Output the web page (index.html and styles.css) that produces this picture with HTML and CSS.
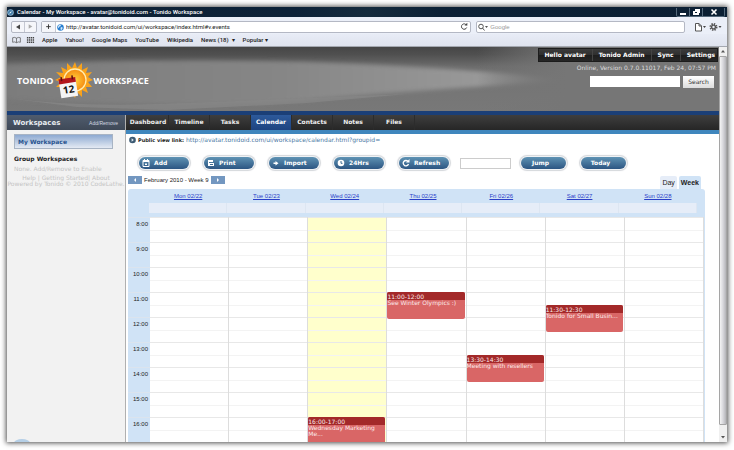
FILE: index.html
```
<!DOCTYPE html>
<html lang="en">
<head>
    <meta charset="UTF-8">
    <meta name="viewport" content="width=device-width, initial-scale=1.0">
    <title>Calendar - My Workspace - avatar@tonidoid.com - Tonido Workspace</title>
    <link rel="stylesheet" href="styles.css">
</head>
<body>
<div class="window">
    <div class="titlebar">
        <svg class="globe" viewBox="0 0 16 16"><circle cx="8" cy="8" r="7.5" fill="#8fb4cf"/><circle cx="8" cy="8" r="5.5" fill="#3f7ba8"/><path d="M11 5L9 9l-4 2 2-4z" fill="#e8f2f8"/></svg>
        <span class="title">Calendar - My Workspace - avatar@tonidoid.com - Tonido Workspace</span>
        <div class="window-buttons">
            <button type="button" aria-label="Minimize"><svg viewBox="0 0 12 8"><path d="M3 5h6v2H3z" fill="#fff"/></svg></button>
            <button type="button" aria-label="Restore"><svg viewBox="0 0 12 8"><path d="M5 1h5v4H9v2H3V3h2z" fill="#fff"/><path d="M5 4h2v1H5z" fill="#0c2034"/></svg></button>
            <button type="button" class="close" aria-label="Close"><svg viewBox="0 0 12 8"><path d="M3.5 1.5l5 5M8.500 1.500l-5 5" stroke="#fff" stroke-width="1.600"/></svg></button>
        </div>
    </div>

    <div class="toolbar">
        <div class="history">
            <button type="button" aria-label="Back"><svg viewBox="0 0 12 10"><path d="M8 2.500v5L4 5z" fill="#444"/></svg></button>
            <button type="button" aria-label="Forward"><svg viewBox="0 0 12 10"><path d="M4 2.500v5L8 5z" fill="#aaa"/></svg></button>
        </div>
        <div class="address">
            <button type="button" aria-label="Add bookmark"><svg viewBox="0 0 14 10"><path d="M7 2.500v5M4.500 5h5" stroke="#333" stroke-width="1"/></svg></button>
            <svg class="globe" viewBox="0 0 16 16"><circle cx="8" cy="8" r="7.500" fill="#2a7fd0"/><path d="M3 4q3-3 6-2l-1 3-3 1-1 3-2-1zM9 7l4 1-1 4-3 2-1-4z" fill="#d5eafa"/></svg>
            <input type="text" aria-label="Address" value="http://avatar.tonidoid.com/ui/workspace/index.html#v.events">
            <button type="button" class="reload" aria-label="Reload"><svg viewBox="0 0 12 10"><path d="M8.500 3.200A2.700 2.700 0 1 0 8.700 5.500" fill="none" stroke="#444" stroke-width="1"/><path d="M6.500 3.500h2.800V.8z" fill="#444"/></svg></button>
        </div>
        <div class="websearch">
            <svg viewBox="0 0 12 10"><circle cx="4" cy="4.500" r="2.300" fill="none" stroke="#555"/><path d="M5.500 6L7.500 8.500" stroke="#555"/><path d="M8 4h3L9.500 6z" fill="#555"/></svg>
            <input type="search" aria-label="Google search" placeholder="Google">
        </div>
        <button type="button" class="tool" aria-label="Page menu"><svg viewBox="0 0 13 10"><path d="M1.500 1.500h3.500l2.500 2.500v5h-6zM5 1.500V4h2.500" fill="#fff" stroke="#555"/><path d="M9 4h3l-1.500 2z" fill="#444"/></svg></button>
        <button type="button" class="tool" aria-label="Settings menu"><svg viewBox="0 0 13 10"><circle cx="4.500" cy="5" r="3" fill="none" stroke="#555" stroke-width="2" stroke-dasharray="1.300 1.056"/><circle cx="4.500" cy="5" r="1.900" fill="none" stroke="#555" stroke-width="1.400"/><path d="M9.500 4h3L11 6z" fill="#444"/></svg></button>
    </div>

    <div class="bookmarks">
        <svg viewBox="0 0 10 8"><path d="M5 2Q3 .5.700 1.500v5Q3 5.500 5 7q2-1.500 4.300-.5v-5Q7 .5 5 2zv5" fill="none" stroke="#555" stroke-width=".8"/></svg>
        <svg viewBox="0 0 10 8"><path d="M1 1.500h8M1 4h8M1 6.500h8" stroke="#444" stroke-width="1.500" stroke-dasharray="1.500 .66"/></svg>
        <a href="#">Apple</a>
        <a href="#">Yahoo!</a>
        <a href="#">Google Maps</a>
        <a href="#">YouTube</a>
        <a href="#">Wikipedia</a>
        <a href="#">News (18) &nbsp;▾</a>
        <a href="#">Popular ▾</a>
    </div>

    <div class="viewport">
        <div class="page">
            <header class="header">
                <svg class="swoosh" viewBox="0 0 712 64" preserveAspectRatio="none">
                    <defs>
                        <linearGradient id="base" x1="0" y1="0" x2="0" y2="1">
                            <stop offset="0" stop-color="#464646"/>
                            <stop offset=".12" stop-color="#505050"/>
                            <stop offset=".3" stop-color="#6b6b6b"/>
                            <stop offset=".5" stop-color="#747474"/>
                            <stop offset="1" stop-color="#787878"/>
                        </linearGradient>
                        <linearGradient id="beam" x1="0" y1="0" x2="1" y2="0">
                            <stop offset="0" stop-color="#7c7c7c"/>
                            <stop offset=".5" stop-color="#868686"/>
                            <stop offset=".85" stop-color="#989898"/>
                            <stop offset="1" stop-color="#767676"/>
                        </linearGradient>
                        <linearGradient id="flat" x1="0" y1="0" x2="1" y2="0">
                            <stop offset="0" stop-color="#767676" stop-opacity="0"/>
                            <stop offset="1" stop-color="#767676"/>
                        </linearGradient>
                        <filter id="soft"><feGaussianBlur stdDeviation="2"/></filter>
                    </defs>
                    <rect width="712" height="64" fill="url(#base)"/>
                    <path d="M-8 18Q200 10 350 17T556 34Q400 44 300 53T-8 52z" fill="url(#beam)" filter="url(#soft)"/>
                    <path d="M0 51Q70 60 150 57T400 47L300 56 160 63 70 60z" fill="#888" opacity=".7"/>
                    <rect x="470" width="90" height="64" fill="url(#flat)"/>
                    <rect x="559" width="153" height="64" fill="#767676"/>
                </svg>
                <div class="logo">
                    <span>TONIDO</span>
                    <svg viewBox="0 0 38 38">
                        <defs><radialGradient id="sun"><stop offset="0" stop-color="#ffd23c"/><stop offset="1" stop-color="#f58a12"/></radialGradient></defs>
                        <path d="M20 0l2 6 5-5 0 7 6-3-2 6 6-1-4 5 5 3-5 2 4 5-6 0 2 6-6-3 0 7-5-5-2 6-3-6-5 5 0-7-6 3 2-6-7 0 5-5-6-2 6-3-5-5 7 1-2-6 6 3 0-7 5 5z" fill="#f9a21b"/>
                        <circle cx="20" cy="18" r="11" fill="url(#sun)" stroke="#ffedb0" stroke-width="1.300"/>
                        <g transform="rotate(-9 14 27)">
                            <path d="M5 17h17v18H5z" fill="#f4f4f4"/>
                            <path d="M5 16h17v5H5z" fill="#b3161b"/>
                            <path d="M8 14v4M19 14v4" stroke="#5b0d10" stroke-width="1.500"/>
                            <text x="13.500" y="31" class="logo-day">12</text>
                        </g>
                    </svg>
                    <span>WORKSPACE</span>
                </div>
                <div class="account">
                    <nav class="account-links">
                        <a href="#">Hello avatar</a>
                        <a href="#">Tonido Admin</a>
                        <a href="#">Sync</a>
                        <a href="#">Settings</a>
                    </nav>
                    <div class="status">Online, Version 0.7.0.11017, Feb 24, 07:57 PM</div>
                    <form class="site-search">
                        <input type="text" aria-label="Search workspace">
                        <button type="submit">Search</button>
                    </form>
                </div>
            </header>

            <div class="columns">
                <aside class="sidebar">
                    <div class="sidebar-head">
                        <h2>Workspaces</h2>
                        <a href="#">Add/Remove</a>
                    </div>
                    <div class="sidebar-body">
                        <a class="workspace" href="#">My Workspace</a>
                        <h3>Group Workspaces</h3>
                        <p>None. Add/Remove to Enable</p>
                    </div>
                    <div class="credits">Help | Getting Started| About<br>Powered by Tonido © 2010 CodeLathe.</div>
                    <svg class="badge" viewBox="0 0 16 3"><ellipse cx="8" cy="4" rx="8" ry="4" fill="#b5cfe6"/></svg>
                </aside>

                <main class="main">
                    <nav class="tabs">
                        <a href="#">Dashboard</a>
                        <a href="#">Timeline</a>
                        <a href="#">Tasks</a>
                        <a href="#" class="active">Calendar</a>
                        <a href="#">Contacts</a>
                        <a href="#">Notes</a>
                        <a href="#">Files</a>
                    </nav>

                    <div class="public">
                        <svg viewBox="0 0 8 8"><circle cx="4" cy="4" r="3.800" fill="#3c5a72"/><path d="M3 2l2.500 2L3 6z" fill="#dfe9f2"/></svg>
                        <b>Public view link:</b>
                        <a href="#">http://avatar.tonidoid.com/ui/workspace/calendar.html?groupid=</a>
                    </div>

                    <div class="actions">
                        <button type="button" class="pill"><svg viewBox="0 0 8 8"><path d="M1 1.500h6v6H1z" fill="none" stroke="#fff"/><path d="M1 1h6v2H1zM3 4.500h2v1.500H3zM2 0h1v1H2zM5 0h1v1H5z" fill="#fff"/></svg>Add</button>
                        <button type="button" class="pill"><svg viewBox="0 0 8 8"><path d="M1 1h5v2H2v1h5v3H1z" fill="#fff"/><path d="M3 5h3v1H3z" fill="#3c6c93"/></svg>Print</button>
                        <button type="button" class="pill"><svg viewBox="0 0 8 8"><path d="M1.500 3.500h2V2l3 2.200-3 2.300V5h-2z" fill="#fff"/></svg>Import</button>
                        <button type="button" class="pill"><svg viewBox="0 0 8 8"><circle cx="4" cy="4" r="3.300" fill="#fff"/><path d="M4 2v2.300h1.500" fill="none" stroke="#3c6c93"/></svg>24Hrs</button>
                        <button type="button" class="pill"><svg viewBox="0 0 8 8"><path d="M6 2.500A2.700 2.700 0 1 0 6.500 5" fill="none" stroke="#fff" stroke-width="1.300"/><path d="M4 3.500h3.500V0z" fill="#fff"/></svg>Refresh</button>
                        <input type="text" class="date" aria-label="Date">
                        <button type="button" class="pill short">Jump</button>
                        <button type="button" class="pill short">Today</button>
                    </div>

                    <div class="range">
                        <button type="button" aria-label="Previous week"><svg viewBox="0 0 8 8"><path d="M5 2v4L3 4z" fill="#fff"/></svg></button>
                        <span>February 2010 - Week 9</span>
                        <button type="button" aria-label="Next week"><svg viewBox="0 0 8 8"><path d="M3 2v4l2-2z" fill="#fff"/></svg></button>
                        <div class="views">
                            <a href="#">Day</a>
                            <a href="#" class="active">Week</a>
                        </div>
                    </div>

                    <section class="calendar">
                        <div class="days">
                            <a href="#">Mon 02/22</a>
                            <a href="#">Tue 02/23</a>
                            <a href="#">Wed 02/24</a>
                            <a href="#">Thu 02/25</a>
                            <a href="#">Fri 02/26</a>
                            <a href="#">Sat 02/27</a>
                            <a href="#">Sun 02/28</a>
                        </div>
                        <div class="allday"><i></i><i></i><i></i><i></i><i></i><i></i><i></i></div>
                        <div class="week">
                            <div class="hours">
                                <span>8:00</span>
                                <span>9:00</span>
                                <span>10:00</span>
                                <span>11:00</span>
                                <span>12:00</span>
                                <span>13:00</span>
                                <span>14:00</span>
                                <span>15:00</span>
                                <span>16:00</span>
                            </div>
                            <div class="day"></div>
                            <div class="day"></div>
                            <div class="day today">
                                <article class="event h16"><h4>16:00-17:00</h4><p>Wednesday Marketing Me...</p></article>
                            </div>
                            <div class="day">
                                <article class="event h11"><h4>11:00-12:00</h4><p>See Winter Olympics :)</p></article>
                            </div>
                            <div class="day">
                                <article class="event h13-half"><h4>13:30-14:30</h4><p>Meeting with resellers</p></article>
                            </div>
                            <div class="day">
                                <article class="event h11-half"><h4>11:30-12:30</h4><p>Tonido for Small Busin...</p></article>
                            </div>
                            <div class="day"></div>
                        </div>
                    </section>
                </main>
            </div>
        </div>

        <div class="scrollbar">
            <svg viewBox="0 0 8 9"><path d="M2 5.500h4L4 3z" fill="#555"/></svg>
            <div class="thumb"></div>
            <svg viewBox="0 0 8 9"><path d="M2 3h4L4 5.500z" fill="#555"/></svg>
        </div>
    </div>
</div>
</body>
</html>
```

FILE: styles.css
```
* {
    box-sizing: border-box;
}
body {
    margin: 0;
    padding: 7px 7px 8px;
    height: 100vh;
    background: #fff;
    font-family: "DejaVu Sans", Verdana, sans-serif;
    font-size: 6px;
    line-height: 8px;
    overflow: hidden;
}
h2, h3, h4, p {
    margin: 0;
}
a {
    color: inherit;
    text-decoration: none;
}
button, input {
    margin: 0;
    padding: 0;
    border: none;
    font: inherit;
    color: inherit;
    background: none;
    min-width: 0;
}
button {
    cursor: pointer;
}
svg {
    display: block;
    flex: none;
}
.window {
    height: 100%;
    display: flex;
    flex-direction: column;
    overflow: hidden;
}
body::before {
    content: "";
    position: absolute;
    inset: 7px 7px 8px;
    box-shadow: 0 0 5px 1px rgba(0, 0, 0, 0.7);
    z-index: -1;
}

/* browser chrome */
.titlebar {
    display: flex;
    align-items: center;
    height: 10px;
    flex: none;
    background: linear-gradient(90deg, #0c2034, #0d2238 40%, #152b3d 50%, #0c2136 60%, #0b1f33);
    color: #fff;
    font-family: Roboto, sans-serif;
    font-weight: 500;
}
.globe {
    width: 7px;
    height: 7px;
}
.title {
    margin-left: 3px;
    flex: 1;
}
.window-buttons {
    display: flex;
    height: 9px;
    margin-right: 2px;
    border: 1px solid #53687a;
    border-top: none;
    border-radius: 0 0 2px 2px;
}
.window-buttons button {
    width: 13px;
    height: 8px;
    border-right: 1px solid #53687a;
}
.window-buttons svg {
    width: 12px;
    height: 8px;
}
.window-buttons .close {
    width: 21px;
    border: none;
}
.window-buttons .close svg {
    margin: auto;
}
.toolbar {
    display: flex;
    align-items: center;
    height: 17px;
    flex: none;
    padding: 3px 5px 0 4px;
    background: #ebeff8;
    color: #222;
    font-family: Roboto, sans-serif;
}
.history, .address, .websearch {
    display: flex;
    align-items: center;
    height: 12px;
    border: 1px solid #b4b8c4;
    border-radius: 2px;
    background: #fff;
}
.history {
    margin-right: 4px;
    background: #f5f6fa;
}
.history button {
    width: 12px;
    height: 10px;
}
.history button + button {
    border-left: 1px solid #c5c8d2;
}
.address {
    flex: 431;
    margin-right: 5px;
}
.address button {
    width: 14px;
    height: 10px;
    border-right: 1px solid #c5c8d2;
    background: #f5f6fa;
}
.address .globe {
    margin-left: 1px;
}
.address input {
    flex: 1;
    margin-left: 2px;
}
.address .reload {
    width: 12px;
    border: none;
    background: none;
}
.websearch {
    flex: 208;
    margin-right: 8px;
}
.websearch svg {
    width: 12px;
    height: 10px;
}
.websearch input {
    flex: 1;
    margin-left: 1px;
    font-family: "Liberation Sans", Arial, sans-serif;
}
.websearch input::placeholder {
    color: #999;
}
.tool {
    width: 13px;
    height: 10px;
    margin-left: 1px;
}
.tool + .tool {
    margin-left: 2px;
}
.bookmarks {
    display: flex;
    align-items: center;
    gap: 8px;
    height: 13px;
    flex: none;
    padding: 0 5px;
    background: linear-gradient(#e8ecf6, #dfe3ee);
    border-bottom: 1px solid #a4a8b0;
    color: #222;
    font-family: Roboto, sans-serif;
    font-weight: 500;
}
.bookmarks svg {
    width: 9px;
    height: 8px;
}
.bookmarks svg + svg {
    margin: 0 -1px 0 -3px;
}
.viewport {
    display: flex;
    flex: 1;
    min-height: 0;
}
.page {
    flex: 1;
    display: flex;
    flex-direction: column;
    min-width: 0;
    overflow: hidden;
    background: #fff;
}
.scrollbar {
    width: 8px;
    display: flex;
    flex-direction: column;
    background: #f0f0f0;
}
.scrollbar svg {
    width: 8px;
    height: 9px;
}
.thumb {
    flex: 1;
    margin-bottom: 8px;
    border: 1px solid #a5a5a5;
    border-radius: 1px;
    background: linear-gradient(90deg, #f4f4f4, #d8d8dc 50%, #b4b4b8);
}

/* page header */
.header {
    position: relative;
    display: flex;
    justify-content: space-between;
    height: 64px;
    flex: none;
    color: #fff;
}
.swoosh {
    position: absolute;
    inset: 0;
    width: 100%;
    height: 100%;
}
.logo {
    position: relative;
    display: flex;
    align-items: center;
    gap: 1px;
    padding: 3px 0 0 10px;
    font-family: "Open Sans", sans-serif;
    font-size: 9px;
    font-weight: 700;
}
.logo svg {
    width: 38px;
    height: 38px;
}
.logo-day {
    font-family: "Open Sans", sans-serif;
    font-size: 10px;
    font-weight: 700;
    text-anchor: middle;
    fill: #111;
}
.account {
    position: relative;
    display: flex;
    flex-direction: column;
    align-items: flex-end;
    padding: 1px 1px 0 0;
}
.account-links {
    display: flex;
    height: 14px;
    padding-right: 2px;
    background: linear-gradient(#3c3c3c, #2e2e2e 50%, #1e1e1e 52%, #262626);
    border: 1px solid #1c1c1c;
    font-weight: 700;
    line-height: 12px;
}
.account-links a {
    padding: 0 6px;
    border-right: 1px solid #444;
}
.account-links a:last-child {
    padding-right: 0;
    border: none;
}
.status {
    margin: 2px 2px 4px 0;
    color: #ddd;
}
.site-search {
    display: flex;
    gap: 3px;
    padding-right: 4px;
}
.site-search input {
    width: 90px;
    height: 11px;
    background: #fff;
    color: #222;
}
.site-search button {
    width: 31px;
    height: 12px;
    background: linear-gradient(#fff, #ddd);
    color: #333;
    font-size: 6px;
}

.columns {
    display: flex;
    flex: 1;
    min-height: 0;
    border-top: 4px solid #1b3f77;
}
.sidebar {
    position: relative;
    width: 119px;
    flex: none;
    background: #f2f2f2;
    border-right: 1px solid #b0b0b0;
}
.sidebar-head {
    display: flex;
    align-items: center;
    justify-content: space-between;
    height: 15px;
    padding: 0 7px 0 6px;
    background: linear-gradient(#505c6e, #3f4957);
    color: #e8ecf0;
}
.sidebar-head h2 {
    font-size: 7px;
}
.sidebar-head a {
    font-family: "Liberation Sans", Arial, sans-serif;
    font-size: 5px;
    color: #d4dae2;
}
.sidebar-body {
    padding: 4px 5px 0 7px;
}
.workspace {
    display: block;
    height: 15px;
    margin: 0 7px 6px 0;
    padding-left: 3px;
    border: 1px solid #a8b4c4;
    background: linear-gradient(#8eaad2, #e4eaf3);
    color: #2a5590;
    font-weight: 700;
    line-height: 14px;
}
.sidebar-body h3 {
    font-size: 6px;
    color: #222;
}
.sidebar-body p, .credits {
    color: #c4c4c4;
}
.sidebar-body p {
    margin: 2px 0;
}
.credits {
    text-align: center;
    line-height: 6px;
    white-space: nowrap;
}
.badge {
    position: absolute;
    left: 7px;
    bottom: 0;
    width: 16px;
    height: 3px;
}
.main {
    flex: 1;
    min-width: 0;
}
.tabs {
    display: flex;
    height: 19px;
    padding-left: 2px;
    background: linear-gradient(#3e3e3e, #262626);
    border-bottom: 4px solid #3f86bd;
    color: #eee;
    font-weight: 700;
    line-height: 14px;
    text-align: center;
}
.tabs a {
    width: 41px;
    border-right: 1px solid #2c2c2c;
}
.tabs .active {
    background: linear-gradient(#2d5a9b, #1d4380);
    color: #fff;
}
.public {
    display: flex;
    align-items: center;
    gap: 2px;
    padding: 2px 3px;
    color: #222;
}
.public svg {
    width: 7px;
    height: 8px;
}
.public b {
    font-size: 5px;
}
.public a {
    color: #4a78a4;
}
.actions {
    display: flex;
    align-items: center;
    gap: 15px;
    padding: 11px 13px 7px;
}
.pill {
    display: flex;
    align-items: center;
    width: 50px;
    height: 12px;
    padding-left: 3px;
    border-radius: 6px;
    background: linear-gradient(#5f93b4, #2c5582);
    box-shadow: 0 0 0 1px #f0f2f4, 0 0 1px 2px #d4d7db;
    color: #fff;
    font-weight: 700;
}
.pill svg {
    width: 8px;
    height: 8px;
    margin-right: 4px;
}
.short {
    width: 45px;
    padding: 0 6px 0 0;
    justify-content: center;
}
.date {
    width: 51px;
    height: 11px;
    margin-left: -4px;
    border: 1px solid #ccc;
}
.date + .short {
    margin-left: -5px;
}
.range {
    display: flex;
    height: 13px;
    padding: 0 18px 0 2px;
    color: #222;
    font-family: "Liberation Sans", Arial, sans-serif;
}
.range button {
    width: 14px;
    height: 8px;
    background: #7397c0;
}
.range button svg {
    width: 8px;
    height: 8px;
    margin: auto;
}
.range span {
    margin: 0 2px;
}
.views {
    display: flex;
    gap: 2px;
    margin-left: auto;
    font-size: 7px;
    line-height: 14px;
}
.views a {
    padding: 0 2px;
    border-radius: 2px 2px 0 0;
    background: #e6edf8;
}
.views .active {
    background: #d0e3f6;
    font-weight: 700;
}

/* week view */
.calendar {
    margin: 0 14px 0 2px;
    padding-right: 1px;
    border-radius: 3px 3px 0 0;
    background: #d0e3f6;
    font-family: "Liberation Sans", Arial, sans-serif;
}
.days, .allday {
    display: grid;
    grid-template-columns: repeat(7, 1fr);
    margin: 0 7px 0 21px;
}
.days {
    padding: 3px 0;
    color: #2a3fc8;
    text-align: center;
    line-height: 8px;
}
.days a {
    text-decoration: underline;
}
.allday {
    height: 10px;
    background: #e6edf8;
}
.allday i {
    border-right: 1px solid #dde6f2;
}
.week {
    display: grid;
    grid-template-columns: 22px repeat(7, 1fr);
    margin-top: 4px;
}
.hours span {
    display: block;
    height: 25px;
    padding-right: 2px;
    border-top: 1px solid #dbe4ee;
    color: #222;
    line-height: 13px;
    text-align: right;
}
.day {
    display: grid;
    grid-template-rows: repeat(10, 13px 12px);
    padding-right: 1px;
    border-right: 1px solid #ddd;
    background: repeating-linear-gradient(#e8e8e8 0 1px, transparent 1px 13px, #f3f3f3 13px 14px, transparent 14px 25px) #fff;
}
.today {
    background-color: #ffffcc;
}
.event {
    margin-bottom: -2px;
    overflow: hidden;
    border-radius: 2px;
    background: #d96666;
    color: #fbeaea;
    font-family: "DejaVu Sans", Verdana, sans-serif;
    line-height: 6px;
}
.event h4 {
    height: 8px;
    background: #a32929;
    font-size: 6px;
    font-weight: 400;
    line-height: 9px;
}
.h11 {
    grid-row: 7 / span 2;
}
.h11-half {
    grid-row: 8 / span 2;
}
.h13-half {
    grid-row: 12 / span 2;
}
.h16 {
    grid-row: 17 / span 2;
}
```
